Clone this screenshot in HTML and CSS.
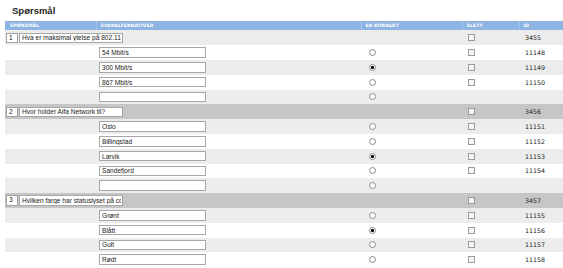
FILE: index.html
```html
<!DOCTYPE html>
<html lang="no">
<head>
<meta charset="utf-8">
<title>Spørsmål</title>
<link rel="stylesheet" href="styles.css">
</head>
<body>
<h1 class="title">Spørsmål</h1>
<table class="grid">
  <colgroup>
    <col class="c-q"><col class="c-a"><col class="c-k"><col class="c-s"><col class="c-id">
  </colgroup>
  <thead>
    <tr><th>Spørsmål</th><th>Svaralternativer</th><th>Er korrekt</th><th>Slett</th><th>ID</th></tr>
  </thead>
  <tbody>
    <tr class="q odd"><td colspan="2"><div class="qcell"><span class="num">1</span><input class="qtext" type="text" value="Hva er maksimal ytelse på 802.11n?"></div></td><td></td><td class="chk"><input type="checkbox"></td><td class="id">3455</td></tr>
    <tr class="even"><td></td><td><input class="ans" type="text" value="54 Mbit/s"></td><td class="rad"><input type="radio" name="q1"></td><td class="chk"><input type="checkbox"></td><td class="id">11148</td></tr>
    <tr class="odd"><td></td><td><input class="ans" type="text" value="300 Mbit/s"></td><td class="rad"><input type="radio" name="q1" checked></td><td class="chk"><input type="checkbox"></td><td class="id">11149</td></tr>
    <tr class="even"><td></td><td><input class="ans" type="text" value="867 Mbit/s"></td><td class="rad"><input type="radio" name="q1"></td><td class="chk"><input type="checkbox"></td><td class="id">11150</td></tr>
    <tr class="odd"><td></td><td><input class="ans" type="text" value=""></td><td class="rad"><input type="radio" name="q1"></td><td></td><td class="id"></td></tr>

    <tr class="q dark"><td colspan="2"><div class="qcell"><span class="num">2</span><input class="qtext" type="text" value="Hvor holder Alfa Network til?"></div></td><td></td><td class="chk"><input type="checkbox"></td><td class="id">3456</td></tr>
    <tr class="odd"><td></td><td><input class="ans" type="text" value="Oslo"></td><td class="rad"><input type="radio" name="q2"></td><td class="chk"><input type="checkbox"></td><td class="id">11151</td></tr>
    <tr class="even"><td></td><td><input class="ans" type="text" value="Billingstad"></td><td class="rad"><input type="radio" name="q2"></td><td class="chk"><input type="checkbox"></td><td class="id">11152</td></tr>
    <tr class="odd"><td></td><td><input class="ans" type="text" value="Larvik"></td><td class="rad"><input type="radio" name="q2" checked></td><td class="chk"><input type="checkbox"></td><td class="id">11153</td></tr>
    <tr class="even"><td></td><td><input class="ans" type="text" value="Sandefjord"></td><td class="rad"><input type="radio" name="q2"></td><td class="chk"><input type="checkbox"></td><td class="id">11154</td></tr>
    <tr class="odd"><td></td><td><input class="ans" type="text" value=""></td><td class="rad"><input type="radio" name="q2"></td><td></td><td class="id"></td></tr>

    <tr class="q dark"><td colspan="2"><div class="qcell"><span class="num">3</span><input class="qtext" type="text" value="Hvilken farge har statuslyset på converteren?"></div></td><td></td><td class="chk"><input type="checkbox"></td><td class="id">3457</td></tr>
    <tr class="odd"><td></td><td><input class="ans" type="text" value="Grønt"></td><td class="rad"><input type="radio" name="q3"></td><td class="chk"><input type="checkbox"></td><td class="id">11155</td></tr>
    <tr class="even"><td></td><td><input class="ans" type="text" value="Blått"></td><td class="rad"><input type="radio" name="q3" checked></td><td class="chk"><input type="checkbox"></td><td class="id">11156</td></tr>
    <tr class="odd"><td></td><td><input class="ans" type="text" value="Gult"></td><td class="rad"><input type="radio" name="q3"></td><td class="chk"><input type="checkbox"></td><td class="id">11157</td></tr>
    <tr class="even"><td></td><td><input class="ans" type="text" value="Rødt"></td><td class="rad"><input type="radio" name="q3"></td><td class="chk"><input type="checkbox"></td><td class="id">11158</td></tr>
  </tbody>
</table>
</body>
</html>
```
FILE: styles.css
```css
html, body {
  margin: 0;
  padding: 0;
  background: #ffffff;
  overflow: hidden;
}
body {
  font-family: "Liberation Sans", Arial, sans-serif;
  color: #333333;
}
.title {
  margin: 0;
  padding: 4.5px 0 0 12px;
  height: 21.2px;
  box-sizing: border-box;
  font-size: 9.5px;
  line-height: 11px;
  font-weight: bold;
  color: #222222;
}
.grid {
  margin-left: 5px;
  width: 566px;
  border-collapse: collapse;
  table-layout: fixed;
}
.c-q { width: 91px; }
.c-a { width: 265px; }
.c-k { width: 101px; }
.c-s { width: 57px; }
.c-id { width: 52px; }

.grid th {
  height: 9.2px;
  padding: 0 0 0 4px;
  background: #8db4e2;
  color: #ffffff;
  font-family: "DejaVu Sans", Verdana, sans-serif;
  font-size: 4.6px;
  line-height: 9px;
  font-weight: bold;
  text-transform: uppercase;
  text-align: left;
  letter-spacing: 0.1px;
  border-left: 1px solid #a6c4ea;
  box-sizing: border-box;
}
.grid th:first-child { border-left: 0; padding-left: 5px; }

.grid td {
  height: 14.8px;
  padding: 0;
  vertical-align: middle;
}
.grid td:nth-child(2) { padding-left: 3px; }
tr.odd td { background: #ececec; }
tr.even td { background: #ffffff; }
tr.dark td { background: #c6c6c6; }

.qcell {
  display: flex;
  align-items: center;
  gap: 1px;
  padding-left: 1px;
}
.num {
  display: inline-block;
  box-sizing: border-box;
  width: 12px;
  height: 10.5px;
  line-height: 8.5px;
  border: 1px solid #a0a0a0;
  background: #ffffff;
  font-size: 6.6px;
  padding-left: 2px;
  color: #222222;
}
input[type="text"] {
  box-sizing: border-box;
  height: 10.5px;
  margin: 0;
  padding: 0 1px 0 2px;
  border: 1px solid #a7a7a7;
  border-radius: 0;
  background: #ffffff;
  font-family: "Liberation Sans", Arial, sans-serif;
  font-size: 6.6px;
  color: #222222;
  outline: none;
}
.qtext { width: 104px; }
.ans { width: 107px; display: block; }

.rad { padding-left: 8px !important; }
.chk { padding-left: 6px !important; }
.id {
  padding-left: 6px !important;
  font-family: "DejaVu Sans", Verdana, sans-serif;
  font-size: 6.3px;
  color: #222222;
}
input[type="radio"], input[type="checkbox"] {
  -webkit-appearance: none;
  appearance: none;
  display: block;
  box-sizing: border-box;
  width: 7px;
  height: 7px;
  margin: 0;
  border: 1px solid #8c8c8c;
  background: #ffffff;
}
input[type="radio"] {
  border-radius: 50%;
}
input[type="radio"]:checked {
  background: radial-gradient(circle, #000000 0 1.3px, #ffffff 1.7px);
}
input[type="checkbox"] {
  background: #f6f6f6;
  border-color: #9a9a9a;
}
```
